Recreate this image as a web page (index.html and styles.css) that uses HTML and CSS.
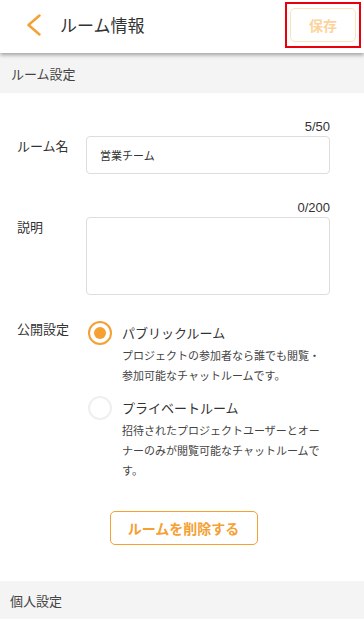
FILE: index.html
```html
<!DOCTYPE html>
<html lang="ja">
<head>
<meta charset="utf-8">
<title>ルーム情報</title>
<link rel="stylesheet" href="styles.css">
</head>
<body>
<header class="topbar">
  <button class="back" aria-label="戻る">
    <svg width="16" height="22" viewBox="0 0 16 22"><polyline points="13.5,1.5 2.5,11 13.5,20.5" fill="none" stroke="#f5a033" stroke-width="2.4" stroke-linecap="round" stroke-linejoin="round"/></svg>
  </button>
  <h1 class="title">ルーム情報</h1>
  <div class="save-frame"><button class="save">保存</button></div>
</header>

<div class="section-head">ルーム設定</div>

<div class="form">
  <div class="field">
    <div class="counter">5/50</div>
    <div class="label">ルーム名</div>
    <div class="input">営業チーム</div>
  </div>
  <div class="field">
    <div class="counter">0/200</div>
    <div class="label">説明</div>
    <div class="input textarea"></div>
  </div>
  <div class="field vis">
    <div class="label">公開設定</div>
    <div class="options">
      <div class="option">
        <span class="radio on"></span>
        <div class="opt-body">
          <div class="opt-title">パブリックルーム</div>
          <div class="opt-desc">プロジェクトの参加者なら誰でも閲覧・参加可能なチャットルームです。</div>
        </div>
      </div>
      <div class="option">
        <span class="radio off"></span>
        <div class="opt-body">
          <div class="opt-title">プライベートルーム</div>
          <div class="opt-desc">招待されたプロジェクトユーザーとオーナーのみが閲覧可能なチャットルームです。</div>
        </div>
      </div>
    </div>
  </div>
</div>

<div class="delete-wrap"><button class="delete">ルームを削除する</button></div>

<div class="section-head second">個人設定</div>
</body>
</html>
```

FILE: styles.css
```css
html, body {
  margin: 0;
  padding: 0;
  background: #ffffff;
}
body {
  width: 364px;
  font-family: "Noto Sans CJK JP", "Noto Sans", sans-serif;
  color: #333333;
}
button {
  font-family: inherit;
  background: none;
  border: none;
  padding: 0;
  margin: 0;
}
.topbar {
  position: relative;
  z-index: 2;
  height: 53px;
  box-sizing: border-box;
  padding-bottom: 4px;
  display: flex;
  align-items: center;
  background: #ffffff;
  box-shadow: 0 2px 4px rgba(0, 0, 0, 0.35);
}
.back {
  margin-left: 26px;
  width: 16px;
  height: 22px;
  display: flex;
}
.title {
  flex: 1;
  margin: 0 0 0 18px;
  font-size: 17px;
  font-weight: 400;
  line-height: 24px;
  color: #333333;
}
.save-frame {
  margin-right: 3px;
  border: 2px solid #e8000b;
  padding: 4px 3px 4px 3px;
  display: flex;
}
.save {
  width: 66px;
  height: 34px;
  box-sizing: border-box;
  border: 1.5px solid #fde3bc;
  border-radius: 5px;
  color: #fbd49c;
  font-size: 14px;
  font-weight: 700;
  line-height: 20px;
}
.section-head {
  height: 40px;
  box-sizing: border-box;
  padding-left: 11px;
  display: flex;
  align-items: center;
  background: #f4f4f4;
  font-size: 13px;
  color: #444444;
}
.section-head.second {
  margin-top: 36px;
  height: 38px;
  padding-left: 10px;
}
.form {
  padding: 26px 34px 0 17px;
}
.field {
  display: grid;
  grid-template-columns: 69px 1fr;
  align-items: start;
}
.field + .field {
  margin-top: 26px;
}
.field.vis {
  margin-top: 24px;
}
.counter {
  grid-column: 2;
  text-align: right;
  font-family: "Liberation Sans", "Noto Sans CJK JP", sans-serif;
  font-size: 13px;
  line-height: 16px;
  color: #333333;
  margin-bottom: 1px;
}
.label {
  grid-column: 1;
  font-size: 13px;
  line-height: 20px;
  color: #333333;
}
.input {
  grid-column: 2;
  height: 38px;
  box-sizing: border-box;
  border: 1px solid #dddddd;
  border-radius: 4px;
  padding-left: 13px;
  display: flex;
  align-items: center;
  font-size: 11px;
  color: #333333;
}
.textarea {
  height: 78px;
}
.options {
  grid-column: 2;
  margin-top: 2px;
}
.option {
  display: flex;
  align-items: flex-start;
}
.option + .option {
  margin-top: 11px;
}
.radio {
  flex: none;
  width: 24px;
  height: 24px;
  box-sizing: border-box;
  border-radius: 50%;
  margin-left: 2px;
  display: grid;
  place-items: center;
}
.radio.on {
  border: 2.5px solid #f5a033;
}
.radio.on::after {
  content: "";
  width: 12px;
  height: 12px;
  border-radius: 50%;
  background: #f5a033;
}
.radio.off {
  border: 2px solid #efefef;
}
.opt-body {
  margin-left: 10px;
}
.opt-title {
  font-size: 13px;
  line-height: 24px;
  color: #333333;
}
.opt-desc {
  width: 204px;
  font-size: 11px;
  line-height: 20px;
  color: #444444;
}
.delete-wrap {
  display: flex;
  justify-content: center;
  margin-top: 31px;
  padding-left: 3px;
}
.delete {
  width: 148px;
  height: 34px;
  box-sizing: border-box;
  border: 1.5px solid #f5a033;
  border-radius: 5px;
  color: #f5a033;
  font-size: 14px;
  font-weight: 700;
  line-height: 20px;
}
```
